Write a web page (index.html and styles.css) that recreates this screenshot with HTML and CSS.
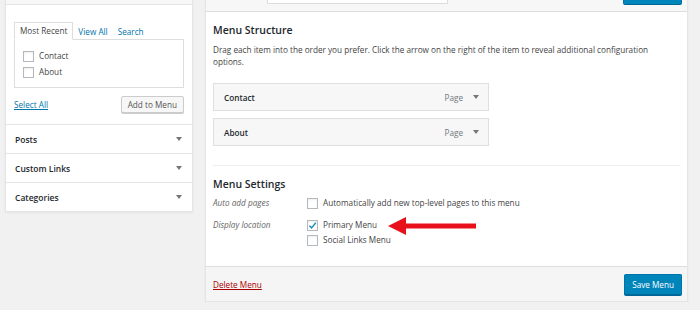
FILE: index.html
```html
<!DOCTYPE html>
<html lang="en">
<head>
  <meta charset="UTF-8">
  <title>Menus</title>
  <link rel="stylesheet" href="styles.css">
</head>
<body>
  <div class="wrap">
    <div class="sidebar">
      <div class="accordion">
        <div class="acc-head"></div>
        <div class="acc-content">
          <div class="tabs">
            <span class="tab active">Most Recent</span>
            <span class="tab">View All</span>
            <span class="tab">Search</span>
          </div>
          <div class="tab-panel">
            <label class="check"><span class="box"></span>Contact</label>
            <label class="check"><span class="box"></span>About</label>
          </div>
          <div class="acc-actions">
            <a href="#" class="select-all">Select All</a>
            <button class="btn">Add to Menu</button>
          </div>
        </div>
        <div class="acc-row">Posts <span class="caret"></span></div>
        <div class="acc-row">Custom Links <span class="caret"></span></div>
        <div class="acc-row">Categories <span class="caret"></span></div>
      </div>
    </div>

    <div class="menu-panel">
      <div class="menu-header">
        <div class="name-input"></div>
        <div class="top-save"></div>
      </div>
      <div class="menu-body">
        <h3>Menu Structure</h3>
        <p class="desc">Drag each item into the order you prefer. Click the arrow on the right of the item to reveal additional configuration options.</p>
        <ul class="menu-items">
          <li class="menu-item"><span class="item-title">Contact</span><span class="item-type">Page</span><span class="caret"></span></li>
          <li class="menu-item"><span class="item-title">About</span><span class="item-type">Page</span><span class="caret"></span></li>
        </ul>

        <div class="settings">
          <h3>Menu Settings</h3>
          <div class="setting-row">
            <div class="setting-label">Auto add pages</div>
            <div class="setting-input">
              <label class="check"><span class="box"></span>Automatically add new top-level pages to this menu</label>
            </div>
          </div>
          <div class="setting-row">
            <div class="setting-label">Display location</div>
            <div class="setting-input">
              <label class="check"><span class="box"><svg viewBox="0 0 10 10" width="9" height="9"><path d="M1.6 5.2 L4 7.6 L8.6 2" fill="none" stroke="#1e8cbe" stroke-width="1.6"/></svg></span>Primary Menu</label>
              <label class="check"><span class="box"></span>Social Links Menu</label>
            </div>
          </div>
        </div>
      </div>
      <div class="menu-footer">
        <a href="#" class="delete">Delete Menu</a>
        <button class="btn-primary">Save Menu</button>
      </div>

      <svg class="red-arrow" width="92" height="20" viewBox="0 0 92 20">
        <polygon points="0,10 18,1 18,7.5 88,7.5 88,12.5 18,12.5 18,19" fill="#e8101a"/>
      </svg>
    </div>
  </div>
</body>
</html>
```

FILE: styles.css
```css
* {
  margin: 0;
  padding: 0;
  box-sizing: border-box;
}

body {
  font-family: 'Open Sans', 'Liberation Sans', sans-serif;
  font-size: 8.2px;
  color: #444;
  background: #f1f1f1;
}

.wrap {
  display: flex;
  align-items: flex-start;
  gap: 12px;
  padding: 0 12px 0 5px;
}

/* left column */
.sidebar {
  width: 188px;
  flex: none;
}

.accordion {
  background: #fff;
  border: 1px solid #e5e5e5;
  border-top: none;
  box-shadow: 0 1px 2px rgba(0, 0, 0, 0.06);
}

.acc-head {
  height: 5px;
  background: #f7f7f7;
  border-bottom: 1px solid #e5e5e5;
}

.acc-content {
  padding: 17px 8px 11px;
  border-bottom: 1px solid #e5e5e5;
}

.tabs {
  display: flex;
  align-items: flex-end;
  height: 17px;
}

.tab {
  color: #0073aa;
  padding: 0 5px;
  line-height: 15px;
}

.tab.active {
  color: #444;
  background: #fff;
  border: 1px solid #ddd;
  border-bottom: 1px solid #fff;
  margin-bottom: -1px;
  position: relative;
  line-height: 16px;
}

.tab-panel {
  border: 1px solid #ddd;
  height: 49px;
  padding: 10px 8px;
  display: flex;
  flex-direction: column;
  gap: 4px;
}

.check {
  display: flex;
  align-items: center;
  gap: 5px;
  color: #444;
  line-height: 12px;
}

.box {
  width: 11px;
  height: 11px;
  border: 1px solid #b4b9be;
  background: #fff;
  box-shadow: inset 0 1px 2px rgba(0, 0, 0, 0.07);
  display: flex;
  align-items: center;
  justify-content: center;
  flex: none;
}

.acc-actions {
  display: flex;
  justify-content: space-between;
  align-items: center;
  margin-top: 8px;
}

.select-all {
  color: #0073aa;
  text-decoration: underline;
}

.btn {
  font-family: inherit;
  font-size: 8.2px;
  color: #555;
  background: #f7f7f7;
  border: 1px solid #ccc;
  border-radius: 2px;
  box-shadow: 0 1px 0 #ccc;
  height: 17px;
  padding: 0 6px;
}

.acc-row {
  display: flex;
  justify-content: space-between;
  align-items: center;
  height: 29px;
  padding: 0 10px 0 9px;
  border-bottom: 1px solid #e5e5e5;
  color: #23282d;
  font-size: 8.5px;
  font-weight: 600;
}

.acc-row:last-child {
  border-bottom: none;
  height: 28px;
}

.caret {
  width: 0;
  height: 0;
  border-left: 3px solid transparent;
  border-right: 3px solid transparent;
  border-top: 4px solid #72777c;
}

/* menu panel */
.menu-panel {
  flex: 1;
  background: #fff;
  border: 1px solid #e5e5e5;
  border-top: none;
  box-shadow: 0 1px 2px rgba(0, 0, 0, 0.05);
  position: relative;
}

.menu-header {
  height: 12px;
  background: #f7f7f7;
  border-bottom: 1px solid #ddd;
  display: flex;
  justify-content: space-between;
  align-items: flex-start;
  padding: 0 5px 0 61px;
}

.name-input {
  width: 181px;
  height: 4px;
  background: #fff;
  border: 1px solid #ddd;
  border-top: none;
}

.top-save {
  width: 59px;
  height: 5px;
  background: #0085ba;
  border: 1px solid #0073aa;
  border-top: none;
  border-bottom-color: #006799;
  border-radius: 0 0 2px 2px;
}

.menu-body {
  padding: 0 7px;
}

h3 {
  font-size: 10.5px;
  font-weight: 600;
  color: #23282d;
  line-height: 14px;
}

.menu-body > h3 {
  margin-top: 11px;
}

.desc {
  margin-top: 7px;
  line-height: 12px;
  width: 450px;
}

.menu-items {
  list-style: none;
  margin-top: 15px;
  display: flex;
  flex-direction: column;
  gap: 7px;
}

.menu-item {
  width: 276px;
  height: 28px;
  background: #f7f7f7;
  border: 1px solid #dfdfdf;
  display: flex;
  align-items: center;
  padding: 0 9px 0 10px;
}

.item-title {
  flex: 1;
  color: #23282d;
  font-weight: 600;
}

.item-type {
  color: #72777c;
  margin-right: 10px;
}

.settings {
  margin-top: 19px;
  border-top: 1px solid #eee;
  padding: 11px 0 20px;
}

.settings h3 {
  margin-bottom: 3px;
}

.setting-row {
  display: flex;
  margin-top: 6px;
}

.setting-row + .setting-row {
  margin-top: 10px;
}

.setting-label {
  width: 94px;
  font-style: italic;
  color: #666;
  line-height: 12px;
}

.setting-input {
  display: flex;
  flex-direction: column;
  gap: 3px;
}

.menu-footer {
  background: #f5f5f5;
  border-top: 1px solid #ddd;
  height: 35px;
  padding: 0 5px 0 7px;
  display: flex;
  justify-content: space-between;
  align-items: center;
}

.delete {
  color: #a00;
  text-decoration: underline;
}

.btn-primary {
  font-family: inherit;
  font-size: 8.2px;
  color: #fff;
  background: #0085ba;
  border: 1px solid #0073aa;
  border-bottom-color: #006799;
  border-radius: 2px;
  box-shadow: 0 1px 0 #006799;
  height: 21px;
  padding: 0 7px;
}

.red-arrow {
  position: absolute;
  left: 182px;
  top: 216px;
}
```
